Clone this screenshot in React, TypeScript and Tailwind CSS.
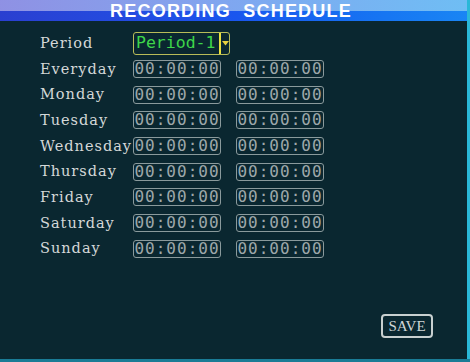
import React from 'react';

const days = ['Everyday', 'Monday', 'Tuesday', 'Wednesday', 'Thursday', 'Friday', 'Saturday', 'Sunday'];

function TimeBox() {
    return (
        <div className="w-[88px] h-[18px] border border-[#8a9a9c] rounded-[3px] flex items-center justify-center text-[#9ea8aa] text-[16px] leading-none tracking-[1px] font-['DejaVu_Sans_Mono',monospace]">
            00:00:00
        </div>
    );
}

export default function App() {
    return (
        <div className="relative w-[470px] h-[362px] bg-[#0a2730] overflow-hidden font-['DejaVu_Serif',serif]">

            {/* Title bar */}
            <div className="relative h-[21px] bg-gradient-to-r from-[#2a3fd0] via-[#1a56ee] to-[#1a86f4]">
                <div className="absolute inset-x-0 top-0 h-[11px] bg-gradient-to-r from-[#9a9ae6] via-[#8ab0f0] to-[#78c4f4] opacity-90"></div>
                <div className="relative h-full flex items-center justify-center pr-[8px] text-white font-bold text-[18px] tracking-[1.2px] leading-none font-['Liberation_Sans',sans-serif]">
                    RECORDING&nbsp;&nbsp;SCHEDULE
                </div>
            </div>

            {/* right & bottom edge */}
            <div className="absolute right-0 top-0 w-[3px] h-full bg-[#2ab8d8]"></div>
            <div className="absolute left-0 bottom-0 w-full h-[3px] bg-[#1a7c96]"></div>

            <div className="pl-[40px] pt-[11px]">
                {/* Period */}
                <div className="flex items-center h-[23px]">
                    <div className="w-[93px] text-[#d4d8d8] text-[14.5px] tracking-[1px] leading-none">Period</div>
                    <div className="w-[97px] h-[23px] border border-[#b8bc58] rounded-[3px] flex items-center">
                        <span className="flex-1 pl-[2px] text-[#3ed64a] text-[16.5px] leading-none font-['DejaVu_Sans_Mono',monospace]">Period-1</span>
                        <span className="w-[2px] h-[21px] bg-[#e8e040]"></span>
                        <span className="w-[8px] flex justify-center">
                            <svg width="7" height="5" viewBox="0 0 7 5"><polygon points="0,0 7,0 3.5,4.5" fill="#e8d040" /></svg>
                        </span>
                    </div>
                </div>

                <div className="pt-[1px]">
                    {days.map((d) => (
                        <div key={d} className="flex items-center h-[25.7px]">
                            <div className="w-[93px] text-[#d4d8d8] text-[14.5px] tracking-[1px] leading-none whitespace-nowrap">{d}</div>
                            <div className="flex gap-[15px]">
                                <TimeBox />
                                <TimeBox />
                            </div>
                        </div>
                    ))}
                </div>
            </div>

            {/* Save */}
            <div className="absolute left-[381px] top-[314px] w-[52px] h-[24px] border-2 border-[#c8d0d0] rounded-[4px] flex items-center justify-center text-[#d0d6d6] text-[15px] leading-none font-['Liberation_Serif',serif]">
                SAVE
            </div>
        </div>
    );
}
